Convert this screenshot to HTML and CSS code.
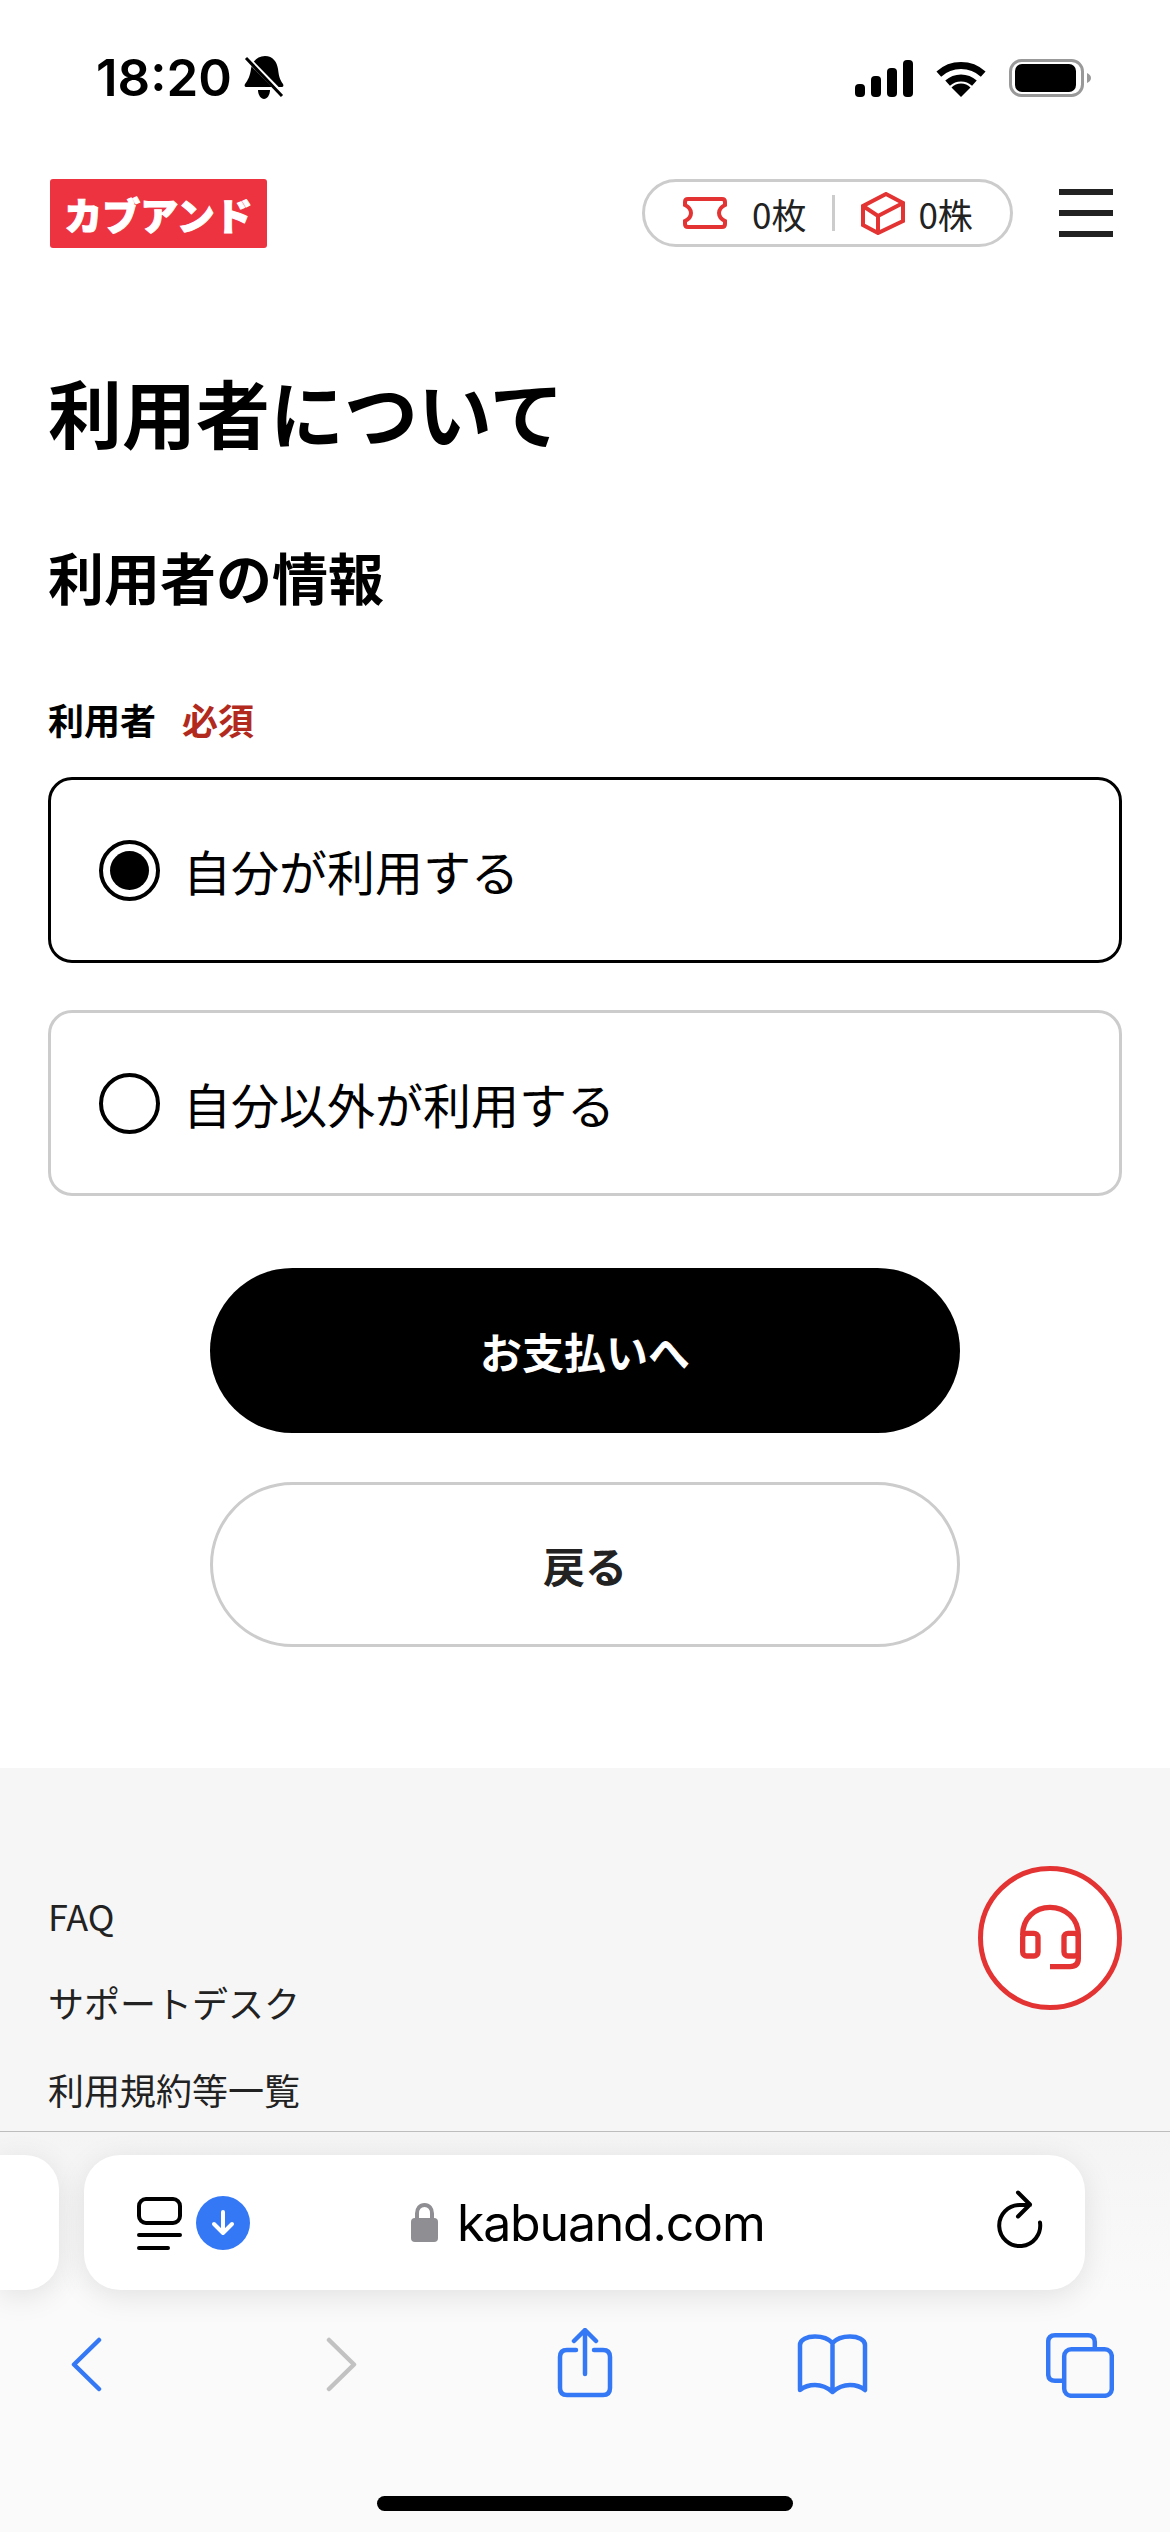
FILE: index.html
```html
<!DOCTYPE html>
<html lang="ja">
<head>
    <meta charset="UTF-8">
    <meta name="viewport" content="width=device-width, initial-scale=1.0">
    <title>利用者について</title>
    <link rel="stylesheet" href="styles.css">
</head>
<body>
    <div class="page">
        <div class="status-bar">
            <div class="status-left">
                <span class="time">18:20</span>
                <svg class="bell" width="40" height="44" viewBox="0 0 40 44">
                    <path d="M21 0c8 0 12 6 13 13 1 8 2 11 5 15 1 2 0 3-2 3H3c-2 0-3-1-2-3 3-4 5-8 6-15 1-7 6-13 14-13z"/>
                    <path d="M14 34h12c0 5-3 9-6 9s-6-4-6-9z"/>
                    <path class="bell-gap" d="M0 -1L38 38"/>
                    <path class="bell-slash" d="M2 2L38 40"/>
                </svg>
            </div>
            <div class="status-right">
                <svg width="58" height="37" viewBox="0 0 58 37">
                    <rect x="0" y="24" width="10" height="13" rx="4"/>
                    <rect x="16" y="16" width="10" height="21" rx="4"/>
                    <rect x="32" y="8" width="10" height="29" rx="4"/>
                    <rect x="48" y="0" width="10" height="37" rx="4"/>
                </svg>
                <svg width="50" height="37" viewBox="0 0 50 37">
                    <path class="wifi-arc" d="M2.8 14.1A33 33 0 0 1 47.2 14.1"/>
                    <path class="wifi-arc" d="M11.6 23.1A20 20 0 0 1 38.4 23.1"/>
                    <path d="M25 37L15.5 27.5A13.4 13.4 0 0 1 34.5 27.5Z"/>
                </svg>
                <svg width="82" height="38" viewBox="0 0 82 38">
                    <rect class="battery-edge" x="1.5" y="1.5" width="72" height="35" rx="11"/>
                    <rect x="6" y="5" width="61" height="28" rx="7"/>
                    <path class="battery-nub" d="M78 14c2.500 1 4 3 4 5s-1.500 4-4 5z"/>
                </svg>
            </div>
        </div>

        <header class="site-header">
            <a class="logo">カブアンド</a>
            <div class="header-right">
                <div class="points">
                    <svg class="points-ticket" width="44" height="32" viewBox="0 0 44 32">
                        <path d="M5 2H39Q42 2 42 5V8Q36 11 36 16Q36 21 42 24V27Q42 30 39 30H5Q2 30 2 27V24Q8 21 8 16Q8 11 2 8V5Q2 2 5 2Z"/>
                    </svg>
                    <span class="points-value">0枚</span>
                    <span class="points-sep"></span>
                    <svg class="points-box" width="44" height="43" viewBox="0 0 44 43">
                        <path d="M25 2L42 11V29L17 41L2 33V14ZM2 14L17 24L42 11M17 24V41"/>
                    </svg>
                    <span class="points-value">0株</span>
                </div>
                <div class="menu-btn"><span></span><span></span><span></span></div>
            </div>
        </header>

        <main class="content">
            <h1>利用者について</h1>
            <h2>利用者の情報</h2>
            <div class="field-label">利用者<span class="required">必須</span></div>
            <div class="choice choice-on">
                <span class="radio"></span>
                <span>自分が利用する</span>
            </div>
            <div class="choice">
                <span class="radio"></span>
                <span>自分以外が利用する</span>
            </div>
            <div class="actions">
                <a class="btn btn-primary">お支払いへ</a>
                <a class="btn btn-back">戻る</a>
            </div>
        </main>

        <footer class="site-footer">
            <a>FAQ</a>
            <a>サポートデスク</a>
            <a>利用規約等一覧</a>
        </footer>

        <!-- support button floats over the footer -->
        <div class="support">
            <svg width="80" height="80" viewBox="150 144 240 240">
                <path d="M188 255C188 205 225 172 270 172C315 172 355 205 355 255V325Q355 350 330 350H270"/>
                <rect x="188" y="250" width="46" height="68" rx="12"/>
                <rect x="312" y="250" width="43" height="68" rx="12"/>
            </svg>
        </div>

        <!-- safari toolbar sits on top of the page -->
        <div class="safari">
            <div class="url-row">
                <div class="tab-stub"></div>
                <div class="url-card">
                    <svg width="46" height="56" viewBox="0 0 46 56">
                        <rect class="reader" x="2" y="4" width="41" height="24" rx="7"/>
                        <path class="reader" d="M2 40H43M2 53H31"/>
                    </svg>
                    <span class="download">
                        <svg width="24" height="26" viewBox="0 0 24 26">
                            <path d="M12 2V23M3 14L12 23L21 14"/>
                        </svg>
                    </span>
                    <svg class="lock" width="27" height="39" viewBox="0 0 27 39">
                        <path class="lock-top" d="M6 18V10.500C6 5.500 9 2 13.500 2S21 5.500 21 10.500V18"/>
                        <rect x="0" y="15" width="27" height="24" rx="4"/>
                    </svg>
                    <span class="url-text">kabuand.com</span>
                    <svg class="reload" width="46" height="64" viewBox="0 -7 46 64">
                        <path d="M42 24.500A20.500 20.500 0 1 1 22 7H32M20 -5.500L32 6.500L20 18.500"/>
                    </svg>
                </div>
            </div>
            <div class="tool-row">
                <svg class="tool" width="32" height="70" viewBox="0 0 32 70"><path d="M29 12L4 36.500L29 61"/></svg>
                <svg class="tool tool-off" width="32" height="70" viewBox="0 0 32 70"><path d="M3 12L28 36.500L3 61"/></svg>
                <svg class="tool" width="56" height="70" viewBox="0 0 56 70">
                    <path d="M19 22H10Q3 22 3 29V60Q3 67 10 67H46Q53 67 53 60V29Q53 22 46 22H37M28 3V46M17 13L28 2L39 13"/>
                </svg>
                <svg class="tool" width="71" height="70" viewBox="0 0 71 70">
                    <path d="M35.500 15C31 10 25 8.500 18 8.500C10 8.500 3 11.500 3 17V62C8 58 12 57 18 57C26 57 31 60 35.500 64C40 60 45 57 53 57C59 57 63 58 68 62V17C68 11.500 61 8.500 53 8.500C46 8.500 40 10 35.500 15V64"/>
                </svg>
                <svg class="tool" width="68" height="70" viewBox="0 0 68 70">
                    <path d="M48.800 19V14Q48.800 7.200 42 7.200H9Q2.200 7.200 2.200 14V46Q2.200 52.800 9 52.800H16"/>
                    <rect x="18.200" y="21.200" width="47.600" height="46.600" rx="7"/>
                </svg>
            </div>
            <div class="home-bar"></div>
        </div>
    </div>
</body>
</html>
```

FILE: styles.css
```css
* {
    box-sizing: border-box;
}

body {
    margin: 0;
    background-color: #fff;
    color: #000;
    font-family: 'Noto Sans CJK JP', 'Noto Sans', sans-serif;
}

.page {
    position: relative;
    width: 1170px;
    height: 2532px;
    overflow: hidden;
}

/* status bar */
.status-bar {
    display: flex;
    justify-content: space-between;
    align-items: center;
    height: 156px;
    padding: 0 79px 0 96px;
}

.status-left {
    display: flex;
    align-items: center;
    gap: 12px;
}

.time {
    font-family: 'Inter', sans-serif;
    font-size: 51px;
    font-weight: 600;
    line-height: 60px;
}

.bell-gap {
    stroke: #fff;
    stroke-width: 5;
}

.bell-slash {
    stroke: #000;
    stroke-width: 3;
}

.status-right {
    display: flex;
    align-items: center;
    gap: 23px;
}

.wifi-arc {
    fill: none;
    stroke: #000;
    stroke-width: 7;
}

.battery-edge {
    fill: none;
    stroke: #999;
    stroke-width: 3;
}

.battery-nub {
    fill: #999;
}

/* header */
.site-header {
    display: flex;
    justify-content: space-between;
    align-items: center;
    height: 114px;
    padding: 0 57px 0 50px;
}

.logo {
    width: 217px;
    height: 69px;
    line-height: 69px;
    text-align: center;
    background-color: #ee3340;
    border-radius: 3px;
    color: #fff;
    font-size: 38px;
    font-weight: 900;
    -webkit-text-stroke: 1px #fff;
}

.header-right {
    display: flex;
    align-items: center;
    gap: 46px;
}

.points {
    display: flex;
    align-items: center;
    width: 371px;
    height: 68px;
    padding-left: 38px;
    border: 3px solid #ccc;
    border-radius: 34px;
}

.points svg {
    fill: none;
    stroke: #e33333;
    stroke-width: 4;
}

.points-value {
    font-size: 35px;
    color: #222;
}

.points-ticket {
    margin-right: 25px;
}

.points-sep {
    width: 3px;
    height: 36px;
    margin: 0 26px 0 26px;
    background-color: #ccc;
}

.points-box {
    margin-right: 13px;
}

.menu-btn {
    display: flex;
    flex-direction: column;
    gap: 15px;
    width: 54px;
}

.menu-btn span {
    height: 6px;
    background-color: #222;
}

/* main form */
.content {
    padding: 0 48px 121px;
}

h1 {
    margin: 91px 0 0;
    font-size: 74px;
    font-weight: 700;
    line-height: 100px;
}

h2 {
    margin: 75px 0 0;
    font-size: 56px;
    font-weight: 700;
    line-height: 80px;
}

.field-label {
    margin: 78px 0 33px;
    font-size: 36px;
    font-weight: 700;
    line-height: 50px;
}

.required {
    margin-left: 26px;
    color: #b22a1e;
}

.choice {
    display: flex;
    align-items: center;
    gap: 23px;
    height: 186px;
    margin-bottom: 47px;
    padding-left: 48px;
    border: 3px solid #ccc;
    border-radius: 24px;
    font-size: 48px;
}

.choice-on {
    border-color: #000;
}

.radio {
    display: flex;
    justify-content: center;
    align-items: center;
    width: 61px;
    height: 61px;
    border: 4px solid #000;
    border-radius: 50%;
}

.choice-on .radio::before {
    content: "";
    width: 39px;
    height: 39px;
    background-color: #000;
    border-radius: 50%;
}

.actions {
    display: flex;
    flex-direction: column;
    align-items: center;
    gap: 49px;
    margin-top: 72px;
}

.btn {
    width: 750px;
    height: 165px;
    line-height: 165px;
    border-radius: 83px;
    text-align: center;
    font-size: 42px;
    font-weight: 700;
}

.btn-primary {
    background-color: #000;
    color: #fff;
}

.btn-back {
    line-height: 159px;
    border: 3px solid #ccc;
    color: #222;
}

/* footer */
.site-footer {
    display: flex;
    flex-direction: column;
    height: 766px;
    padding: 104px 48px 0;
    background-color: #f6f6f6;
    font-size: 36px;
    color: #222;
    line-height: 87px;
}

.support {
    position: absolute;
    top: 1866px;
    left: 978px;
    display: flex;
    justify-content: center;
    align-items: center;
    width: 144px;
    height: 144px;
    background-color: #fff;
    border: 5px solid #e33333;
    border-radius: 50%;
}

.support svg {
    fill: none;
    stroke: #e33333;
    stroke-width: 16;
}

/* safari bar */
.safari {
    position: absolute;
    left: 0;
    right: 0;
    bottom: 0;
    height: 401px;
    padding-top: 23px;
    background: linear-gradient(#f4f4f4, #fafafa 40%);
    border-top: 1px solid #bdbdbd;
}

.url-row {
    display: flex;
    gap: 25px;
    height: 135px;
}

.tab-stub {
    width: 59px;
    background-color: #fff;
    border-radius: 0 34px 34px 0;
    box-shadow: 0 6px 30px rgba(0, 0, 0, 0.1);
}

.url-card {
    display: flex;
    align-items: center;
    width: 1001px;
    padding-left: 53px;
    background-color: #fff;
    border-radius: 36px;
    box-shadow: 0 6px 30px rgba(0, 0, 0, 0.1);
}

.reader {
    fill: none;
    stroke: #000;
    stroke-width: 4;
    stroke-linecap: round;
}

.download {
    display: flex;
    justify-content: center;
    align-items: center;
    width: 54px;
    height: 54px;
    margin-left: 13px;
    background-color: #3478f6;
    border-radius: 50%;
}

.download svg {
    fill: none;
    stroke: #fff;
    stroke-width: 4;
    stroke-linecap: round;
    stroke-linejoin: round;
}

.lock {
    margin-left: 161px;
    fill: #8e8e93;
}

.lock-top {
    fill: none;
    stroke: #8e8e93;
    stroke-width: 4;
}

.url-text {
    margin-left: 19px;
    font-family: 'Inter', sans-serif;
    font-size: 50px;
    letter-spacing: -1.2px;
    line-height: 60px;
}

.reload {
    overflow: visible;
    margin-left: auto;
    margin-right: 41px;
    fill: none;
    stroke: #000;
    stroke-width: 4;
    stroke-linecap: round;
    stroke-linejoin: round;
}

.tool-row {
    display: grid;
    grid-template-columns: 172px 340px 146px 349px 146px;
    justify-items: center;
    margin-top: 38px;
}

.tool {
    fill: none;
    stroke: #3478f6;
    stroke-width: 4.500;
    stroke-linecap: round;
    stroke-linejoin: round;
}

.tool-off {
    stroke: #c2c2c2;
}

.home-bar {
    width: 416px;
    height: 15px;
    margin: 98px auto 0;
    background-color: #000;
    border-radius: 8px;
}
```
